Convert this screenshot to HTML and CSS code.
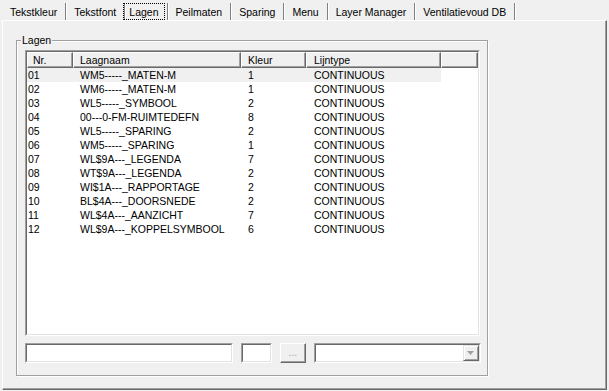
FILE: index.html
```html
<!DOCTYPE html>
<html>
<head>
<meta charset="utf-8">
<link rel="stylesheet" href="styles.css">
</head>
<body>
<div class="window">
  <div class="tabs">
    <div class="tab">Tekstkleur</div>
    <div class="tab">Tekstfont</div>
    <div class="tab active"><span class="focus">Lagen</span></div>
    <div class="tab">Peilmaten</div>
    <div class="tab">Sparing</div>
    <div class="tab">Menu</div>
    <div class="tab">Layer Manager</div>
    <div class="tab">Ventilatievoud DB</div>
  </div>
  <div class="panel">
    <div class="group">
      <div class="group-title">Lagen</div>
      <div class="list">
        <div class="list-inner">
          <div class="list-head">
            <div class="hcell h-nr">Nr.</div>
            <div class="hcell h-name">Laagnaam</div>
            <div class="hcell h-color">Kleur</div>
            <div class="hcell h-type">Lijntype</div>
            <div class="hcell h-rest"></div>
          </div>
          <div class="list-body">
            <div class="row sel"><span class="c-nr">01</span><span class="c-name">WM5-----_MATEN-M</span><span class="c-color">1</span><span class="c-type">CONTINUOUS</span></div>
            <div class="row"><span class="c-nr">02</span><span class="c-name">WM6-----_MATEN-M</span><span class="c-color">1</span><span class="c-type">CONTINUOUS</span></div>
            <div class="row"><span class="c-nr">03</span><span class="c-name">WL5-----_SYMBOOL</span><span class="c-color">2</span><span class="c-type">CONTINUOUS</span></div>
            <div class="row"><span class="c-nr">04</span><span class="c-name">00---0-FM-RUIMTEDEFN</span><span class="c-color">8</span><span class="c-type">CONTINUOUS</span></div>
            <div class="row"><span class="c-nr">05</span><span class="c-name">WL5-----_SPARING</span><span class="c-color">2</span><span class="c-type">CONTINUOUS</span></div>
            <div class="row"><span class="c-nr">06</span><span class="c-name">WM5-----_SPARING</span><span class="c-color">1</span><span class="c-type">CONTINUOUS</span></div>
            <div class="row"><span class="c-nr">07</span><span class="c-name">WL$9A---_LEGENDA</span><span class="c-color">7</span><span class="c-type">CONTINUOUS</span></div>
            <div class="row"><span class="c-nr">08</span><span class="c-name">WT$9A---_LEGENDA</span><span class="c-color">2</span><span class="c-type">CONTINUOUS</span></div>
            <div class="row"><span class="c-nr">09</span><span class="c-name">WI$1A---_RAPPORTAGE</span><span class="c-color">2</span><span class="c-type">CONTINUOUS</span></div>
            <div class="row"><span class="c-nr">10</span><span class="c-name">BL$4A---_DOORSNEDE</span><span class="c-color">2</span><span class="c-type">CONTINUOUS</span></div>
            <div class="row"><span class="c-nr">11</span><span class="c-name">WL$4A---_AANZICHT</span><span class="c-color">7</span><span class="c-type">CONTINUOUS</span></div>
            <div class="row"><span class="c-nr">12</span><span class="c-name">WL$9A---_KOPPELSYMBOOL</span><span class="c-color">6</span><span class="c-type">CONTINUOUS</span></div>
          </div>
        </div>
      </div>
      <div class="controls">
        <div class="edit e-name"><div class="edit-inner"></div></div>
        <div class="edit e-color"><div class="edit-inner"></div></div>
        <div class="btn"><div class="btn-inner">...</div></div>
        <div class="edit combo">
          <div class="edit-inner combo-inner">
            <div class="combo-btn">
              <svg width="7" height="4" viewBox="0 0 7 4"><path d="M0 0H7L3.5 4Z" fill="#a0a0a0"/></svg>
            </div>
          </div>
        </div>
      </div>
    </div>
  </div>
</div>
</body>
</html>
```
FILE: styles.css
```css
* { box-sizing: border-box; }
body {
  margin: 0;
  background: #f0f0f0;
  font-family: "Liberation Sans", Arial, sans-serif;
  font-size: 10.5px;
  color: #000;
}
.window {
  width: 609px;
  height: 391px;
  display: flex;
  flex-direction: column;
  overflow: hidden;
}
.tabs {
  height: 20px;
  padding: 3px 0 0 2px;
  display: flex;
  align-items: flex-start;
}
.tab {
  height: 17px;
  line-height: 16px;
  padding: 1px 8px 0 8px;
  border-right: 1px solid #808080;
  box-shadow: 1px 0 0 #fff;
  white-space: nowrap;
}
.tab.active {
  padding: 0 2px;
  margin-left: -4px;
}
.focus {
  display: block;
  height: 17px;
  line-height: 16px;
  padding: 0 5px;
  border: 1px dotted #000;
}
.panel {
  margin: 0 2px 1px 2px;
  height: 370px;
  border-top: 1px solid #fff;
  border-left: 1px solid #fff;
  border-right: 1px solid #696969;
  border-bottom: 1px solid #696969;
  box-shadow: inset -1px -1px 0 #a0a0a0;
  padding: 19px 0 0 13px;
}
.group {
  width: 472px;
  height: 336px;
  border: 1px solid #a0a0a0;
  box-shadow: inset 1px 1px 0 #fff, 1px 1px 0 #fff;
  padding: 0 6px 0 8px;
}
.group-title {
  width: fit-content;
  margin: -7px 0 3px -4px;
  padding: 0 1px;
  height: 13px;
  line-height: 13px;
  background: #f0f0f0;
}
.list {
  width: 455px;
  height: 286px;
  border: 1px solid;
  border-color: #a0a0a0 #fff #fff #a0a0a0;
}
.list-inner {
  height: 100%;
  border: 1px solid;
  border-color: #696969 #e3e3e3 #e3e3e3 #696969;
  background: #fff;
}
.list-head {
  display: grid;
  grid-template-columns: 46px 168px 65px 135px 37px;
  height: 16px;
  background: #f0f0f0;
}
.hcell {
  height: 16px;
  line-height: 14px;
  border-top: 1px solid #fff;
  border-left: 1px solid #fff;
  border-right: 1px solid #696969;
  border-bottom: 1px solid #696969;
  box-shadow: inset -1px -1px 0 #a0a0a0;
  white-space: nowrap;
  overflow: hidden;
}
.h-nr { padding-left: 5px; }
.h-name { padding-left: 6px; }
.h-color { padding-left: 6px; }
.h-type { padding-left: 7px; }
.row {
  display: grid;
  grid-template-columns: 46px 168px 65px 135px;
  width: 414px;
  height: 14px;
  line-height: 14px;
  white-space: nowrap;
}
.row.sel { background: #f0f0f0; }
.c-nr { padding-left: 1px; }
.c-name { padding-left: 7px; }
.c-color { padding-left: 7px; }
.c-type { padding-left: 8px; }
.controls {
  display: flex;
  gap: 8px;
  margin-top: 7px;
  height: 20px;
}
.edit {
  height: 20px;
  border: 1px solid;
  border-color: #a0a0a0 #fff #fff #a0a0a0;
}
.edit-inner {
  height: 100%;
  border: 1px solid;
  border-color: #696969 #e3e3e3 #e3e3e3 #696969;
  background: #fff;
}
.e-name { width: 208px; }
.e-color { width: 32px; }
.combo { width: 167px; }
.combo-inner {
  display: flex;
  justify-content: flex-end;
}
.combo-btn {
  width: 16px;
  height: 16px;
  background: #f0f0f0;
  border-top: 1px solid #e3e3e3;
  border-left: 1px solid #e3e3e3;
  border-right: 1px solid #696969;
  border-bottom: 1px solid #696969;
  box-shadow: inset 1px 1px 0 #fff, inset -1px -1px 0 #a0a0a0;
  display: flex;
  align-items: center;
  justify-content: center;
}
.btn {
  width: 26px;
  height: 20px;
  border-top: 1px solid #fff;
  border-left: 1px solid #fff;
  border-right: 1px solid #696969;
  border-bottom: 1px solid #696969;
  background: #f0f0f0;
}
.btn-inner {
  height: 100%;
  border-right: 1px solid #a0a0a0;
  border-bottom: 1px solid #a0a0a0;
  color: #a0a0a0;
  text-align: center;
  line-height: 16px;
}
```
